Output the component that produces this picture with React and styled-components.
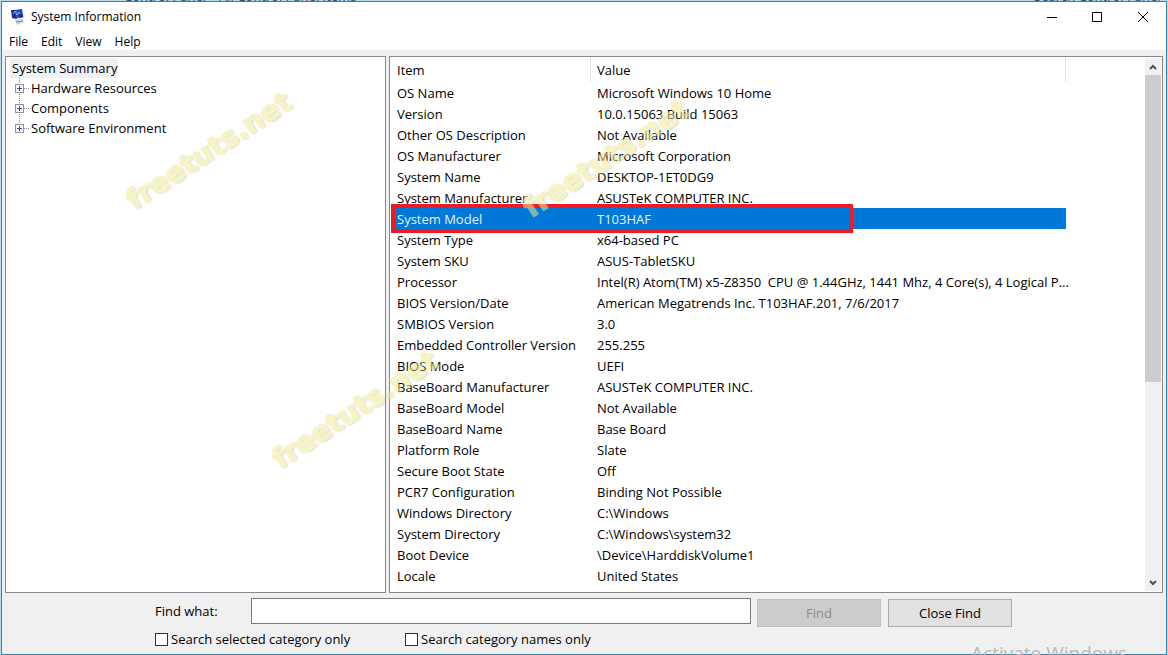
import React from "react";
import styled, { createGlobalStyle, css } from "styled-components";

const Global = createGlobalStyle`
  *, *::before, *::after { box-sizing: border-box; }
  body {
    margin: 0;
    overflow: hidden;
    background: #b9dcf0;
    color: #000;
    font-family: "Open Sans", "Noto Sans", sans-serif;
    font-size: 13px;
    line-height: 20px;
  }
  button, input { font: inherit; color: inherit; margin: 0; }
`;

const Desktop = styled.div`
  position: relative;
  overflow: hidden;
  padding: 1px;
`;

const Backdrop = styled.span`
  position: absolute;
  top: -14px;
  left: ${(p) => p.$x}px;
  color: #24506e;
  white-space: nowrap;
`;

const Window = styled.main`
  position: relative;
  display: flex;
  flex-direction: column;
  background: #f0f0f0;
  border: 1px solid #3c7fa6;
`;

const TitleBar = styled.header`
  display: flex;
  align-items: center;
  height: 29px;
  padding-left: 8px;
  gap: 5px;
  background: #fff;
`;

const Title = styled.h1`
  flex: 1;
  margin: 0;
  font-size: 12px;
  font-weight: 400;
`;

const Captions = styled.div`
  display: flex;
`;

const CaptionButton = styled.button`
  display: flex;
  align-items: center;
  justify-content: center;
  width: 46px;
  height: 29px;
  padding: 0;
  border: 0;
  background: none;
`;

const MenuBar = styled.nav`
  display: flex;
  gap: 13px;
  height: 19px;
  padding-left: 7px;
  background: #fff;
`;

const MenuItem = styled.button`
  padding: 0;
  border: 0;
  background: none;
  font-size: 12px;
  line-height: 22px;
`;

const Panes = styled.div`
  display: flex;
  gap: 3px;
  padding: 6px 3px 0;
`;

const Pane = styled.section`
  border: 1px solid #828790;
  background: #fff;
`;

const TreePane = styled(Pane)`
  width: 381px;
  flex: none;
  padding: 1px 4px;
`;

const TreeRoot = styled.div`
  width: max-content;
  padding: 0 1px 0 2px;
  background: #f0f0f0;
`;

const TreeList = styled.ul`
  list-style: none;
  margin: 0;
  padding: 0;
`;

const TreeItem = styled.li`
  display: flex;
  gap: 2px;
  padding-left: 5px;
  height: 20px;
`;

const DetailPane = styled(Pane)`
  display: flex;
  flex: 1;
  min-width: 0;
  height: 537px;
`;

const TableArea = styled.div`
  flex: 1;
  min-width: 0;
  padding: 0 79px 0 2px;
`;

const Table = styled.table`
  width: 100%;
  table-layout: fixed;
  border-collapse: separate;
  border-spacing: 0;
`;

const HeadCell = styled.th`
  width: ${(p) => p.$width || "auto"};
  height: 25px;
  padding: 1px 6px 0;
  border-right: 1px solid #e5e5e5;
  text-align: left;
  font-weight: 400;
`;

const HeadItem = styled(HeadCell)`
  padding-left: 5px;
`;

const Cell = styled.td`
  height: 21px;
  padding: 2px 0 0 6px;
  line-height: 19px;
  white-space: pre;
  &:first-child { padding-left: 5px; }
`;

const Row = styled.tr`
  ${(p) =>
    p.$selected &&
    css`
      position: relative;
      background: #0078d7;
      color: #e4f2ff;
    `}
`;

const Highlight = styled.span`
  position: absolute;
  top: -4px;
  left: -1px;
  width: 462px;
  height: 29px;
  border: 4px solid #ed1c24;
`;

const ScrollBar = styled.div`
  display: flex;
  flex-direction: column;
  width: 16px;
  margin: 1px 1px 1px 0;
  background: #f0f0f0;
`;

const ScrollButton = styled.button`
  display: flex;
  align-items: center;
  justify-content: center;
  height: 17px;
  padding: 0;
  border: 0;
  background: none;
`;

const ScrollTrack = styled.div`
  flex: 1;
`;

const ScrollThumb = styled.div`
  height: 307px;
  background: #cdcdcd;
`;

const FindBar = styled.form`
  display: grid;
  grid-template-columns: 96px 500px 262px;
  padding: 5px 0 5px 153px;
`;

const FindLabel = styled.label`
  line-height: 26px;
`;

const FindInput = styled.input`
  height: 26px;
  padding: 0 4px;
  border: 1px solid #7a7a7a;
  background: #fff;
`;

const Buttons = styled.div`
  display: flex;
  gap: 7px;
  padding: 1px 0 0 6px;
`;

const PushButton = styled.button`
  flex: none;
  width: 124px;
  height: 28px;
  padding: 0;
  border: 1px solid #adadad;
  background: #e1e1e1;
  &:disabled {
    border-color: #bfbfbf;
    background: #ccc;
    color: #8b8b8b;
  }
`;

const CheckRow = styled.div`
  grid-column: 1 / -1;
  display: flex;
  padding-top: 2px;
`;

const CheckLabel = styled.label`
  display: flex;
  align-items: center;
  gap: 3px;
  width: 250px;
`;

const CheckBox = styled.input`
  appearance: none;
  width: 13px;
  height: 13px;
  border: 1px solid #333;
  background: #fff;
`;

const Watermark = styled.span`
  position: absolute;
  left: ${(p) => p.$x}px;
  top: ${(p) => p.$y}px;
  transform: translate(-50%, -50%) rotate(-33deg);
  font: bold 28px/30px "DejaVu Sans", sans-serif;
  color: #f0eb96;
  -webkit-text-stroke: 1px #f0eb96;
  text-shadow: 1px 1px 2px #a0a0a0;
  opacity: 0.55;
  pointer-events: none;
`;

const Activation = styled.span`
  position: absolute;
  top: 640px;
  right: 41px;
  font-size: 19px;
  line-height: 26px;
  color: #b9b9b9;
  white-space: nowrap;
`;

const AppIcon = () => (
  <svg width="16" height="16" viewBox="0 0 16 16" aria-hidden="true">
    <path d="M1 1l11-1 2 9-11 1z" fill="#b9c6ea" />
    <path d="M1 1l5 0 1 9-5-1z" fill="#1c2f96" />
    <path d="M6 1l6-1 1 8-6 1z" fill="#2547b8" />
    <path d="M3 5l2-3 2 4 2-3 2 3" fill="none" stroke="#8fb0f4" />
    <path d="M9 6l3-2 1 4-3 1z" fill="#172986" />
    <path d="M5 11l7-1 2 3-7 3z" fill="#c6cad6" />
    <path d="M6 13l7-1" stroke="#8d93a5" />
  </svg>
);

const Expander = ({ last }) => (
  <svg width="14" height="20" viewBox="0 0 14 20" aria-hidden="true">
    <path
      d={last ? "M4.500 0v10M9 10.500h5" : "M4.500 0v20M9 10.500h5"}
      stroke="#888"
      strokeDasharray="1 1"
    />
    <rect x="0.500" y="6.500" width="8" height="8" fill="#f8f9fc" stroke="#919191" />
    <path d="M2 10.500h5M4.500 8v5" stroke="#314e9c" />
  </svg>
);

const Chevron = ({ up }) => (
  <svg width="8" height="6" viewBox="0 0 8 6" aria-hidden="true">
    <path d={up ? "M1 5L4 2L7 5" : "M1 1L4 4L7 1"} fill="none" stroke="#505050" strokeWidth="2" />
  </svg>
);

const captions = [
  ["Minimize", "M1 6.500h10"],
  ["Maximize", "M0.500 1.500h9v9h-9z"],
  ["Close", "M0 1l10 10M10 1L0 11"],
];

const treeItems = ["Hardware Resources", "Components", "Software Environment"];

const rows = [
  ["OS Name", "Microsoft Windows 10 Home"],
  ["Version", "10.0.15063 Build 15063"],
  ["Other OS Description", "Not Available"],
  ["OS Manufacturer", "Microsoft Corporation"],
  ["System Name", "DESKTOP-1ET0DG9"],
  ["System Manufacturer", "ASUSTeK COMPUTER INC."],
  ["System Model", "T103HAF"],
  ["System Type", "x64-based PC"],
  ["System SKU", "ASUS-TabletSKU"],
  ["Processor", "Intel(R) Atom(TM) x5-Z8350  CPU @ 1.44GHz, 1441 Mhz, 4 Core(s), 4 Logical P..."],
  ["BIOS Version/Date", "American Megatrends Inc. T103HAF.201, 7/6/2017"],
  ["SMBIOS Version", "3.0"],
  ["Embedded Controller Version", "255.255"],
  ["BIOS Mode", "UEFI"],
  ["BaseBoard Manufacturer", "ASUSTeK COMPUTER INC."],
  ["BaseBoard Model", "Not Available"],
  ["BaseBoard Name", "Base Board"],
  ["Platform Role", "Slate"],
  ["Secure Boot State", "Off"],
  ["PCR7 Configuration", "Binding Not Possible"],
  ["Windows Directory", "C:\\Windows"],
  ["System Directory", "C:\\Windows\\system32"],
  ["Boot Device", "\\Device\\HarddiskVolume1"],
  ["Locale", "United States"],
];

export default function App() {
  return (
    <Desktop>
      <Global />
      <Backdrop $x={124}>Control Panel</Backdrop>
      <Backdrop $x={219}>All Control Panel Items</Backdrop>
      <Backdrop $x={1034}>Search Control Panel</Backdrop>
      <Window>
        <TitleBar>
          <AppIcon />
          <Title>System Information</Title>
          <Captions>
            {captions.map(([name, d]) => (
              <CaptionButton key={name} aria-label={name}>
                <svg width="10" height="12" viewBox="0 0 10 12" overflow="visible">
                  <path d={d} fill="none" stroke="#000" />
                </svg>
              </CaptionButton>
            ))}
          </Captions>
        </TitleBar>
        <MenuBar>
          {["File", "Edit", "View", "Help"].map((m) => (
            <MenuItem key={m}>{m}</MenuItem>
          ))}
        </MenuBar>
        <Panes>
          <TreePane>
            <TreeRoot>System Summary</TreeRoot>
            <TreeList>
              {treeItems.map((t, i) => (
                <TreeItem key={t}>
                  <Expander last={i === treeItems.length - 1} />
                  {t}
                </TreeItem>
              ))}
            </TreeList>
          </TreePane>
          <DetailPane>
            <TableArea>
              <Table>
                <thead>
                  <tr>
                    <HeadItem $width="199px">Item</HeadItem>
                    <HeadCell>Value</HeadCell>
                  </tr>
                </thead>
                <tbody>
                  {rows.map(([item, value]) => (
                    <Row key={item} $selected={item === "System Model"}>
                      <Cell>
                        {item}
                        {item === "System Model" && <Highlight />}
                      </Cell>
                      <Cell>{value}</Cell>
                    </Row>
                  ))}
                </tbody>
              </Table>
            </TableArea>
            <ScrollBar>
              <ScrollButton aria-label="Scroll up">
                <Chevron up />
              </ScrollButton>
              <ScrollTrack>
                <ScrollThumb />
              </ScrollTrack>
              <ScrollButton aria-label="Scroll down">
                <Chevron />
              </ScrollButton>
            </ScrollBar>
          </DetailPane>
        </Panes>
        <FindBar onSubmit={(e) => e.preventDefault()}>
          <FindLabel htmlFor="find">Find what:</FindLabel>
          <FindInput id="find" type="text" />
          <Buttons>
            <PushButton type="submit" disabled>Find</PushButton>
            <PushButton type="button">Close Find</PushButton>
          </Buttons>
          <CheckRow>
            <CheckLabel>
              <CheckBox type="checkbox" />
              Search selected category only
            </CheckLabel>
            <CheckLabel>
              <CheckBox type="checkbox" />
              Search category names only
            </CheckLabel>
          </CheckRow>
        </FindBar>
      </Window>
      <Watermark $x={209} $y={151}>freetuts.net</Watermark>
      <Watermark $x={606} $y={159}>freetuts.net</Watermark>
      <Watermark $x={355} $y={410}>freetuts.net</Watermark>
      <Activation>Activate Windows</Activation>
    </Desktop>
  );
}
